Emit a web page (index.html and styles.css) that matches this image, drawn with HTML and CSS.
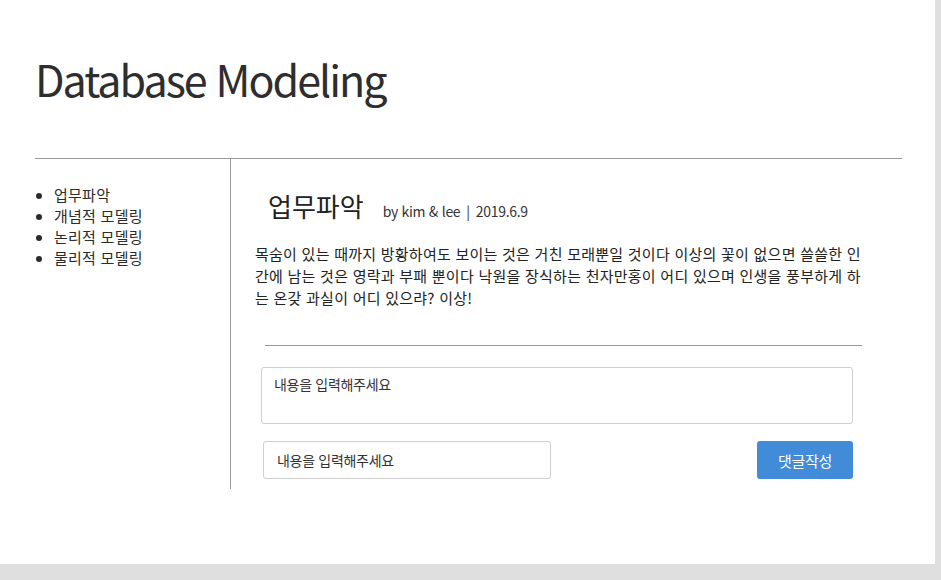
FILE: index.html
```html
<!DOCTYPE html>
<html lang="ko">
<head>
<meta charset="utf-8">
<title>Database Modeling</title>
<link rel="stylesheet" href="styles.css">
</head>
<body>
<div class="page">
  <header class="header">
    <h1 class="title">Database Modeling</h1>
  </header>
  <div class="layout">
    <nav class="sidebar">
      <ul class="menu">
        <li>업무파악</li>
        <li>개념적 모델링</li>
        <li>논리적 모델링</li>
        <li>물리적 모델링</li>
      </ul>
    </nav>
    <main class="content">
      <div class="post-head">
        <h2 class="post-title">업무파악</h2>
        <span class="meta">by kim &amp; lee<span class="sep">|</span>2019.6.9</span>
      </div>
      <p class="post-body">목숨이 있는 때까지 방황하여도 보이는 것은 거친 모래뿐일 것이다 이상의 꽃이 없으면 쓸쓸한 인간에 남는 것은 영락과 부패 뿐이다 낙원을 장식하는 천자만홍이 어디 있으며 인생을 풍부하게 하는 온갖 과실이 어디 있으랴? 이상!</p>
      <hr class="divider">
      <form class="comment-form">
        <textarea class="comment-text" placeholder="내용을 입력해주세요"></textarea>
        <div class="comment-row">
          <input class="comment-input" type="text" placeholder="내용을 입력해주세요">
          <button class="comment-btn" type="button">댓글작성</button>
        </div>
      </form>
    </main>
  </div>
</div>
</body>
</html>
```
FILE: styles.css
```css
* { box-sizing: border-box; }
html, body { margin: 0; padding: 0; }
body {
  background: #dfdfdf;
  font-family: "Noto Sans CJK KR", "Noto Sans", sans-serif;
  color: #2b2b2b;
  width: 941px;
  height: 580px;
  overflow: hidden;
}
.page {
  width: 935px;
  height: 564px;
  background: #fff;
  padding: 0 33px 0 35px;
}
.header {
  height: 159px;
  border-bottom: 1px solid #9a9a9a;
  padding-top: 48px;
}
.title {
  margin: 0;
  font-size: 43px;
  line-height: 60px;
  font-weight: 400;
  letter-spacing: -2px;
  color: #2e2e2e;
}
.layout {
  display: flex;
  align-items: stretch;
}
.sidebar {
  width: 196px;
  border-right: 1px solid #9a9a9a;
  padding-top: 25px;
}
.menu {
  margin: 0;
  padding-left: 19px;
  font-size: 15px;
  line-height: 21px;
  letter-spacing: 0.25px;
}
.content {
  flex: 1;
  padding: 29px 0 10px 24px;
}
.post-head {
  display: flex;
  align-items: baseline;
  padding-left: 13px;
}
.post-title {
  margin: 0;
  font-size: 26px;
  line-height: 36px;
  font-weight: 400;
  color: #222;
}
.meta {
  margin-left: 19px;
  font-size: 14px;
  letter-spacing: -0.3px;
  color: #333;
}
.sep { margin: 0 6px; }
.post-body {
  margin: 19px 0 0;
  width: 616px;
  font-size: 15px;
  line-height: 22px;
  letter-spacing: 0.25px;
  color: #222;
}
.divider {
  margin: 36px 0 0 10px;
  width: 597px;
  border: 0;
  border-top: 1px solid #9a9a9a;
  height: 0;
}
.comment-form {
  margin-top: 21px;
  display: flex;
  flex-direction: column;
  gap: 17px;
  width: 598px;
  margin-left: 6px;
}
.comment-text {
  width: 592px;
  height: 57px;
  border: 1px solid #cfcfcf;
  border-radius: 3px;
  padding: 7px 12px;
  font-family: inherit;
  font-size: 14px;
  line-height: 18px;
  letter-spacing: -0.3px;
  resize: none;
  outline: none;
}
.comment-row {
  display: flex;
  justify-content: space-between;
  align-items: center;
  width: 592px;
  padding-left: 2px;
}
.comment-input {
  width: 288px;
  height: 38px;
  border: 1px solid #cfcfcf;
  border-radius: 3px;
  padding: 0 13px;
  font-family: inherit;
  font-size: 14px;
  letter-spacing: -0.3px;
  outline: none;
}
.comment-text::placeholder, .comment-input::placeholder { color: #333; }
.comment-btn {
  width: 96px;
  height: 38px;
  border: 0;
  border-radius: 3px;
  background: #418bd8;
  color: #fff;
  font-family: inherit;
  font-size: 15px;
  letter-spacing: -0.3px;
}
```
